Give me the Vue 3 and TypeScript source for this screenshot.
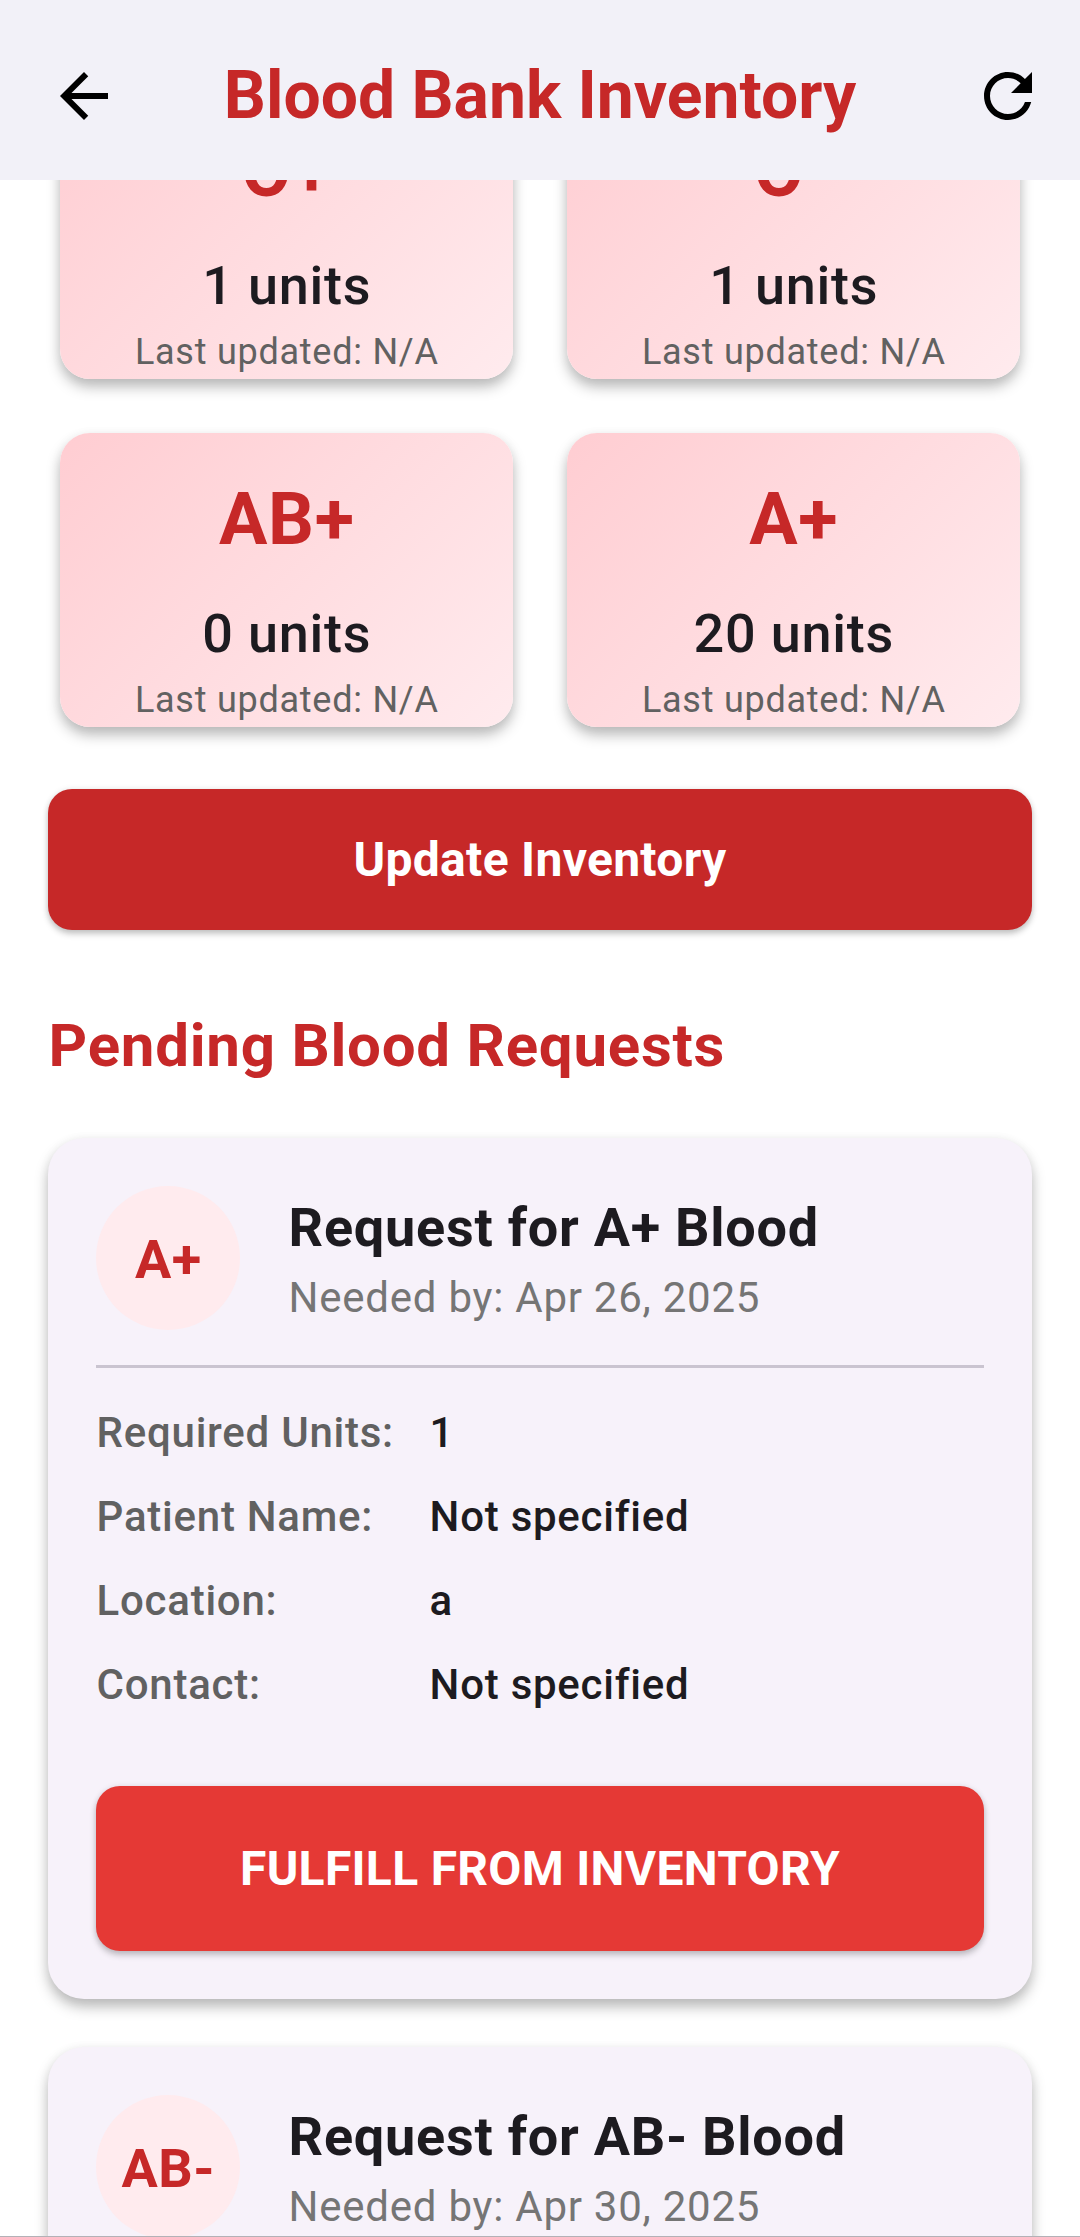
<script setup lang="ts">
interface Stock {
  type: string
  units: number
}
interface Detail {
  label: string
  value: string
}
interface BloodRequest {
  type: string
  neededBy: string
  details: Detail[]
}

const stock: Stock[] = [
  { type: 'O+', units: 1 },
  { type: 'O-', units: 1 },
  { type: 'AB+', units: 0 },
  { type: 'A+', units: 20 },
]

const requests: BloodRequest[] = [
  {
    type: 'A+',
    neededBy: 'Apr 26, 2025',
    details: [
      { label: 'Required Units:', value: '1' },
      { label: 'Patient Name:', value: 'Not specified' },
      { label: 'Location:', value: 'a' },
      { label: 'Contact:', value: 'Not specified' },
    ],
  },
  { type: 'AB-', neededBy: 'Apr 30, 2025', details: [] },
]
</script>

<template>
  <div class="screen">
    <header class="bar">
      <svg class="icon" viewBox="0 0 24 24"><path d="M20 11H7.83l5.59-5.59L12 4l-8 8 8 8 1.41-1.41L7.83 13H20v-2z" /></svg>
      <h1 class="title">Blood Bank Inventory</h1>
      <svg class="icon" viewBox="0 0 24 24"><path d="M17.65 6.35C16.2 4.9 14.21 4 12 4c-4.42 0-7.99 3.58-7.99 8s3.57 8 7.99 8c3.73 0 6.84-2.55 7.73-6h-2.08c-.82 2.33-3.04 4-5.65 4-3.31 0-6-2.69-6-6s2.69-6 6-6c1.66 0 3.14.69 4.22 1.78L13 11h7V4l-2.35 2.35z" /></svg>
    </header>
    <main class="viewport">
      <div class="content">
        <section class="grid">
          <article v-for="s in stock" :key="s.type" class="stock">
            <div class="type">{{ s.type }}</div>
            <div class="units">{{ s.units }} units</div>
            <div class="updated">Last updated: N/A</div>
          </article>
        </section>
        <button class="btn update">Update Inventory</button>
        <h2 class="heading">Pending Blood Requests</h2>
        <article v-for="r in requests" :key="r.type" class="request">
          <div class="head">
            <div class="avatar">{{ r.type }}</div>
            <div class="summary">
              <div class="name">Request for {{ r.type }} Blood</div>
              <div class="needed">Needed by: {{ r.neededBy }}</div>
            </div>
          </div>
          <template v-if="r.details.length">
            <div class="divider"></div>
            <div v-for="d in r.details" :key="d.label" class="row">
              <span class="label">{{ d.label }}</span>
              <span>{{ d.value }}</span>
            </div>
            <button class="btn fulfill">FULFILL FROM INVENTORY</button>
          </template>
        </article>
      </div>
    </main>
  </div>
</template>

<style>
body { margin: 0; background: #fff; }
</style>

<style scoped>
.screen { box-sizing: border-box; width: 1080px; height: 2237px; overflow: hidden; display: flex; flex-direction: column; background: #fff; border-bottom: 1px solid #b3b1b7; font-family: Roboto, sans-serif; letter-spacing: 0.75px; text-indent: 0.6px; color: #1d1b20; }
.bar { flex: none; box-sizing: border-box; height: 180px; padding: 12px 36px 0 48px; display: flex; align-items: center; justify-content: space-between; background: #f2f1f8; }
.icon { width: 72px; height: 72px; fill: #000; }
.title { margin: 0 12px 0 0; font-size: 66px; line-height: 84px; font-weight: 700; letter-spacing: 0; text-indent: 0; color: #c62828; }
.viewport { flex: 1; min-height: 0; overflow: hidden; }
.content { margin-top: -107px; padding: 0 48px; }
.grid { display: grid; grid-template-columns: 1fr 1fr; grid-auto-rows: 318px; gap: 30px; }
.stock { margin: 12px; box-sizing: border-box; padding-top: 35px; border-radius: 30px; text-align: center; background: linear-gradient(135deg, #ffcdd2, #ffebee); box-shadow: 0 8px 14px rgba(0, 0, 0, 0.26), 0 2px 12px rgba(0, 0, 0, 0.05); }
.type { font-size: 72px; line-height: 103px; font-weight: 700; color: #c62828; }
.units { margin-top: 24px; font-size: 54px; line-height: 77px; font-weight: 500; }
.updated { margin-top: 2px; font-size: 36px; line-height: 52px; color: #616161; }
.btn { display: block; width: 100%; padding: 0; border: 0; border-radius: 24px; font: 700 48px Roboto, sans-serif; letter-spacing: 0.3px; color: #fff; box-shadow: 0 4px 6px rgba(0, 0, 0, 0.22), 0 0 6px rgba(0, 0, 0, 0.08); }
.update { height: 141px; margin-top: 50px; background: #c62828; }
.heading { margin: 73px 0 49px; font-size: 60px; line-height: 86px; font-weight: 700; color: #c62828; }
.request { box-sizing: border-box; margin-bottom: 48px; padding: 48px; border-radius: 36px; background: #f7f2fa; box-shadow: 0 8px 14px rgba(0, 0, 0, 0.26), 0 2px 12px rgba(0, 0, 0, 0.05); }
.head { display: flex; align-items: center; gap: 48px; }
.avatar { box-sizing: border-box; width: 144px; height: 144px; padding-top: 2px; border-radius: 50%; display: flex; align-items: center; justify-content: center; background: #ffebee; font-size: 54px; font-weight: 700; letter-spacing: 0.45px; color: #c62828; }
.summary { padding-top: 1px; }
.name { font-size: 54px; line-height: 77px; font-weight: 700; }
.needed { margin-top: 2px; font-size: 42px; line-height: 60px; color: #757575; }
.divider { height: 3px; margin: 35px 0; background: #cac4d0; }
.row { display: flex; padding-bottom: 24px; font-size: 42px; line-height: 60px; font-weight: 500; }
.label { width: 333px; color: #616161; }
.fulfill { height: 165px; margin-top: 47px; background: #e53935; }
</style>
